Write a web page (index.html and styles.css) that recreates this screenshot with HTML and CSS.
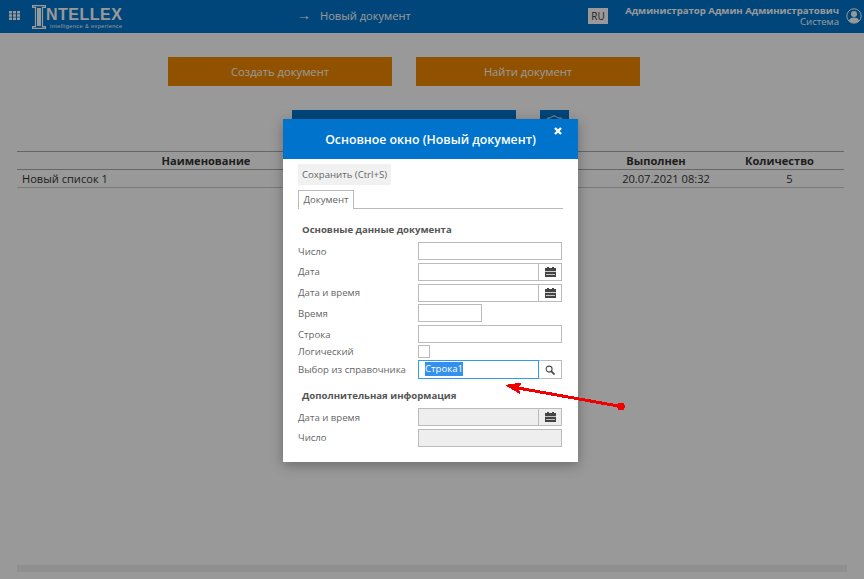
FILE: index.html
```html
<!DOCTYPE html>
<html lang="ru">
<head>
    <meta charset="UTF-8">
    <meta name="viewport" content="width=device-width, initial-scale=1.0">
    <title>Новый документ</title>
    <link rel="stylesheet" href="styles.css">
</head>
<body>
    <header class="topbar">
        <svg class="apps" width="11" height="9" viewBox="0 0 11 9">
            <path fill="#fff" d="M0 0h3v2.500H0zM4 0h3v2.500H4zM8 0h3v2.500H8zM0 3.250h3v2.500H0zM4 3.250h3v2.500H4zM8 3.250h3v2.500H8zM0 6.500h3V9H0zM4 6.500h3V9H4zM8 6.500h3V9H8z"/>
        </svg>
        <div class="logo">
            <svg class="logo-mark" width="14" height="24" viewBox="0 0 14 24">
                <path fill="none" stroke="#fff" stroke-width="1.200" d="M.6.600h12.800v1.800h-2.900v19.200h2.900v1.800H.6v-1.800h2.900V2.400H.6z"/>
                <path fill="#fff" d="M5 3h4v18H5z"/>
            </svg>
            <div class="logo-words">
                <div class="logo-name">NTELLEX</div>
                <div class="logo-sub">intelligence &amp; experience</div>
            </div>
        </div>
        <div class="crumb"><span class="crumb-arrow">&#8594;</span>Новый документ</div>
        <div class="lang">RU</div>
        <div class="user">
            <div class="user-name">Администратор Админ Администратович</div>
            <div class="user-role">Система</div>
        </div>
        <svg class="avatar" width="16" height="16" viewBox="0 0 16 16">
            <circle cx="8" cy="8" r="7.200" fill="none" stroke="#fff" stroke-width="1"/>
            <circle cx="8" cy="6" r="3" fill="#fff"/>
            <path fill="#fff" d="M2.800 13c.6-2.600 2.600-3.600 5.200-3.600s4.600 1 5.200 3.600A7 7 0 0 1 8 15a7 7 0 0 1-5.200-2z"/>
        </svg>
    </header>

    <main class="page">
        <div class="actions">
            <button class="action">Создать документ</button>
            <button class="action">Найти документ</button>
        </div>
        <div class="tools">
            <div class="tool-wide"></div>
            <div class="tool-icon">
                <svg width="17" height="12" viewBox="0 0 17 12">
                    <path fill="none" stroke="#fff" stroke-width="1" d="M1 11V4c0-.5.500-1 1-1h2c1 0 1-2 4-2s3 2 4 2h3c.5 0 1 .5 1 1v7z"/>
                </svg>
            </div>
        </div>
        <table class="list">
            <thead>
                <tr><th class="col-name">Наименование</th><th class="col-mid"></th><th class="col-done">Выполнен</th><th class="col-count">Количество</th></tr>
            </thead>
            <tbody>
                <tr><td>Новый список 1</td><td></td><td class="center">20.07.2021 08:32</td><td class="center">5</td></tr>
            </tbody>
        </table>
        <div class="hscroll"></div>
    </main>

    <div class="overlay"></div>

    <section class="modal">
        <div class="modal-head">
            Основное окно (Новый документ)
            <svg class="modal-close" width="8" height="8" viewBox="0 0 8 8">
                <path stroke="#fff" stroke-width="2.400" d="M1 1l6 6M7 1L1 7"/>
            </svg>
        </div>
        <div class="modal-body">
            <button class="save">Сохранить (Ctrl+S)</button>
            <div class="tabs"><div class="tab">Документ</div></div>

            <h3 class="group">Основные данные документа</h3>
            <div class="row row-first">
                <label class="label">Число</label>
                <div class="box"></div>
            </div>
            <div class="row">
                <label class="label">Дата</label>
                <div class="box box-short"></div>
                <div class="addon"><svg class="cal" width="11" height="10" viewBox="0 0 11 10"><path fill="#444" d="M2 0h2v1h3V0h2v1h2v3H0V1h2zM0 4.800h11V10H0z"/><path fill="#fff" d="M1 7h9v.7H1z"/></svg></div>
            </div>
            <div class="row">
                <label class="label">Дата и время</label>
                <div class="box box-short"></div>
                <div class="addon"><svg class="cal" width="11" height="10" viewBox="0 0 11 10"><path fill="#444" d="M2 0h2v1h3V0h2v1h2v3H0V1h2zM0 4.800h11V10H0z"/><path fill="#fff" d="M1 7h9v.7H1z"/></svg></div>
            </div>
            <div class="row">
                <label class="label">Время</label>
                <div class="box box-time"></div>
            </div>
            <div class="row">
                <label class="label">Строка</label>
                <div class="box"></div>
            </div>
            <div class="row row-check">
                <label class="label">Логический</label>
                <div class="check"></div>
            </div>
            <div class="row row-pick">
                <label class="label">Выбор из справочника</label>
                <div class="box box-short box-focus"><span class="selected">Строка1</span></div>
                <div class="addon"><svg width="10" height="10" viewBox="0 0 11 11"><circle cx="4.500" cy="4.500" r="3.300" fill="none" stroke="#444" stroke-width="1.200"/><path stroke="#444" stroke-width="1.800" d="M7 7l3.500 3.500"/></svg></div>
            </div>

            <h3 class="group group-extra">Дополнительная информация</h3>
            <div class="row row-extra">
                <label class="label">Дата и время</label>
                <div class="box box-short box-off"></div>
                <div class="addon box-off"><svg class="cal" width="11" height="10" viewBox="0 0 11 10"><path fill="#444" d="M2 0h2v1h3V0h2v1h2v3H0V1h2zM0 4.800h11V10H0z"/><path fill="#eee" d="M1 7h9v.7H1z"/></svg></div>
            </div>
            <div class="row">
                <label class="label">Число</label>
                <div class="box box-off"></div>
            </div>
        </div>
    </section>

    <!-- red pointer drawn over the screenshot -->
    <svg class="pointer" width="130" height="40" viewBox="0 0 130 40" shape-rendering="crispEdges">
        <path fill="none" stroke="#f00000" stroke-width="3" d="M121 31.500L18 13"/>
        <path fill="#f00000" d="M5 10L22 7.500L19 12L20 19z"/>
        <circle cx="121" cy="31.500" r="3.800" fill="#f00000"/>
    </svg>
</body>
</html>
```

FILE: styles.css
```css
* {
    box-sizing: border-box;
}
html, body {
    height: 100%;
}
body {
    margin: 0;
    font-family: "Open Sans", sans-serif;
    font-size: 11px;
    color: #333;
    background: #fff;
    overflow: hidden;
}

/* top bar */
.topbar {
    height: 33px;
    background: #0075cc;
    color: #fff;
    display: flex;
    align-items: center;
    padding-left: 9px;
}
.apps {
    flex: none;
    margin: 0 12px 2px 0;
}
.logo {
    display: flex;
    width: 268px;
    height: 24px;
    flex: none;
    color: #fff;
}
.logo-mark {
    flex: none;
}
.logo-name {
    font-family: "Liberation Sans", sans-serif;
    font-weight: bold;
    font-size: 16px;
    line-height: 19px;
    letter-spacing: .5px;
}
.logo-sub {
    font-family: "Liberation Sans", sans-serif;
    font-size: 5.500px;
    line-height: 5px;
    letter-spacing: .45px;
    margin-left: 4px;
    white-space: nowrap;
}
.crumb {
    width: 288px;
    flex: none;
    font-size: 11.100px;
    margin-bottom: 5px;
}
.crumb-arrow {
    font-size: 14px;
    margin: 0 9px 0 -3px;
}
.lang {
    width: 20px;
    height: 16px;
    background: #fff;
    color: #333;
    font-size: 10px;
    line-height: 16px;
    text-align: center;
    flex: none;
    margin-bottom: 2px;
}
.user {
    width: 231px;
    flex: none;
    text-align: right;
    line-height: 11px;
    margin-bottom: 2px;
    white-space: nowrap;
}
.user-name {
    font-size: 9.600px;
    font-weight: 700;
}
.user-role {
    font-size: 9.600px;
}
.avatar {
    flex: none;
    margin: 0 0 2px 7px;
}

/* page under the dialog */
.page {
    padding: 24px 17px 0;
    position: relative;
    height: 546px;
}
.actions {
    display: flex;
    gap: 24px;
    margin-left: 151px;
}
.action {
    width: 224px;
    height: 29px;
    padding: 0;
    border: none;
    background: #f28900;
    color: #fff;
    font: 11.200px "Open Sans", sans-serif;
}
.tools {
    display: flex;
    gap: 24px;
    margin: 24px 0 0 275px;
}
.tool-wide {
    width: 224px;
    height: 29px;
    background: #0075cc;
}
.tool-icon {
    width: 29px;
    height: 29px;
    background: #0075cc;
    text-align: center;
    padding-top: 5px;
}
.list {
    width: 827px;
    margin-top: 12px;
    border-collapse: collapse;
    table-layout: fixed;
    font-size: 11.100px;
}
.list th {
    height: 18px;
    padding: 0;
    font-weight: 700;
    text-align: center;
    border-top: 1px solid #aaa;
    border-bottom: 1px solid #aaa;
    line-height: 16px;
}
.list td {
    height: 18px;
    padding: 0 5px;
    border-bottom: 1px solid #ccc;
    line-height: 16px;
}
.list .center {
    text-align: center;
}
.col-name {
    width: 378px;
}
.col-mid {
    width: 202px;
}
.list .col-done {
    width: 138px;
    padding-right: 20px;
}
.list .col-count {
    width: 109px;
    padding-right: 20px;
}
.hscroll {
    position: absolute;
    left: 17px;
    right: 17px;
    bottom: 7px;
    height: 7px;
    background: #efefef;
}

/* dim layer */
.overlay {
    position: absolute;
    inset: 0;
    background: rgba(0, 0, 0, .4);
}

/* dialog */
.modal {
    position: absolute;
    left: 283px;
    top: 119px;
    width: 295px;
    height: 343px;
    background: #fff;
    box-shadow: 0 3px 12px rgba(0, 0, 0, .3);
}
.modal-head {
    height: 40px;
    background: #0073cc;
    color: #fff;
    font-size: 12.300px;
    font-weight: 600;
    line-height: 42px;
    text-align: center;
    position: relative;
}
.modal-close {
    position: absolute;
    top: 8px;
    right: 16px;
}
.modal-body {
    padding: 5px 15px 0;
    color: #666;
    font-size: 9.600px;
}
.save {
    display: block;
    height: 21px;
    width: 93px;
    padding: 0;
    border: none;
    background: #f1f1f1;
    color: #666;
    font: 9.600px "Open Sans", sans-serif;
}
.tabs {
    margin-top: 5px;
    width: 265px;
    height: 19px;
    border-bottom: 1px solid #bbb;
}
.tab {
    width: 56px;
    height: 19px;
    border: 1px solid #bbb;
    border-bottom: none;
    background: #fff;
    font-size: 9.600px;
    line-height: 17px;
    text-align: center;
}
.group {
    margin: 15px 0 0 4px;
    font-size: 9.600px;
    font-weight: 700;
    line-height: 12px;
    color: #555;
}
.group-extra {
    margin-top: 11px;
}
.row {
    display: flex;
    align-items: center;
    height: 18px;
    margin-top: 2.750px;
}
.row-first {
    margin-top: 6px;
}
.row-extra {
    margin-top: 6px;
}
.row-check {
    height: 13px;
    margin-top: 2px;
}
.row-pick {
    height: 19px;
    margin-top: 2px;
}
.label {
    width: 120px;
    flex: none;
}
.box {
    width: 144px;
    height: 100%;
    border: 1px solid #bbb;
    background: #fff;
}
.box-short {
    width: 121px;
}
.box-time {
    width: 64px;
}
.box-focus {
    border-color: #2e9bf5;
    padding-left: 6px;
    line-height: 15px;
    color: #fff;
    overflow: hidden;
}
.selected {
    background: #3390ee;
    display: inline-block;
    line-height: 14px;
    margin-top: 1px;
    vertical-align: top;
}
.box-off {
    background: #eee;
}
.addon {
    width: 23px;
    height: 100%;
    border: 1px solid #bbb;
    border-left: none;
    display: flex;
    align-items: center;
    justify-content: center;
}
.row .box-short + .addon {
    border-left: 1px solid #bbb;
    margin-left: -1px;
    width: 24px;
}
.row .box-focus + .addon {
    border-left: none;
    margin-left: 0;
    width: 23px;
}
.check {
    width: 12px;
    height: 13px;
    border: 1px solid #bbb;
}

.pointer {
    position: absolute;
    left: 500px;
    top: 375px;
}
```
